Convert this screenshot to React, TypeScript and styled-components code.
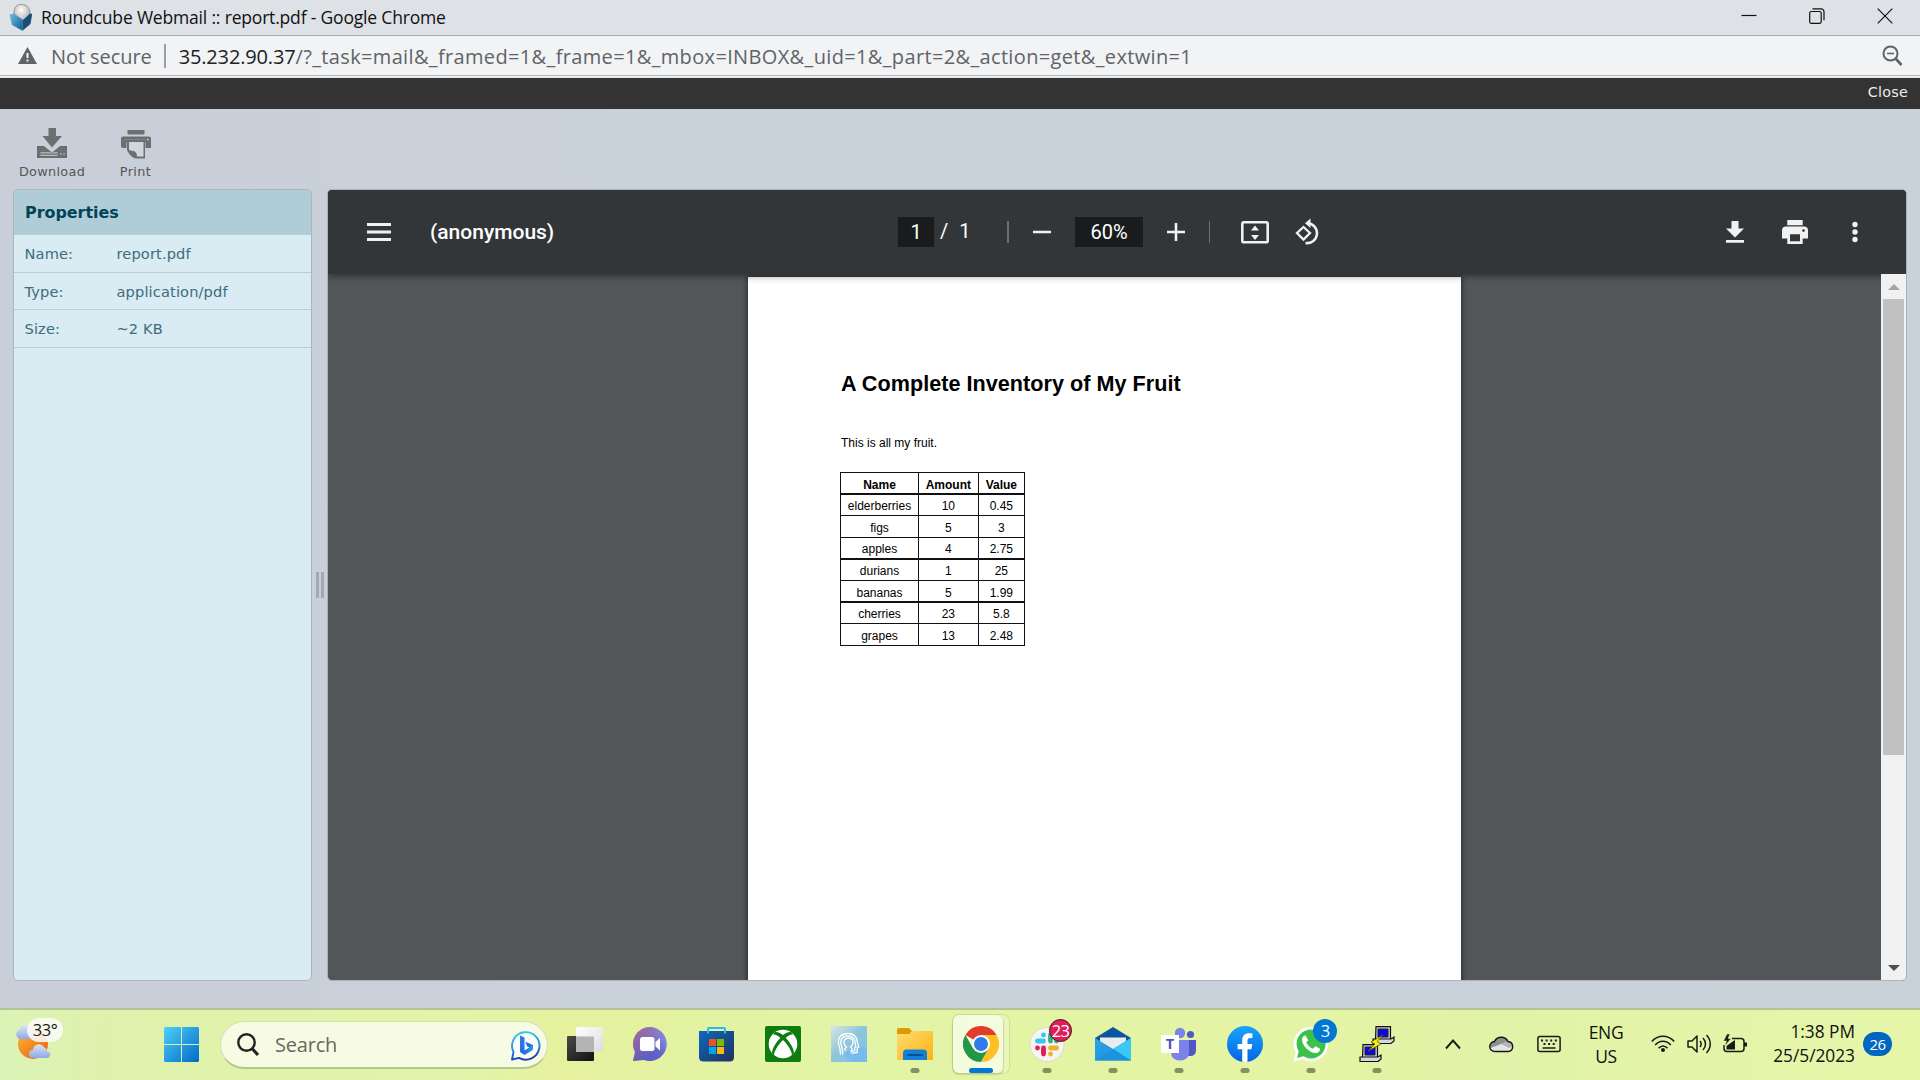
import React from 'react';
import styled, { createGlobalStyle } from 'styled-components';

const UI = '"Open Sans", "Noto Sans", sans-serif';
const SKIN = '"DejaVu Sans", Verdana, sans-serif';

const Global = createGlobalStyle`
  * { box-sizing: border-box; }
  body { margin: 0; overflow: hidden; }
  svg { display: block; flex: none; }
`;

const Screen = styled.div`
  width: 1920px;
  height: 1080px;
  display: flex;
  flex-direction: column;
  overflow: hidden;
  background: #c9d0d8;
  font-family: ${UI};
`;

/* ---------- text ---------- */
const Label = styled.span<{ $size: number; $color?: string; $ls?: number; $weight?: number; $font?: string }>`
  font-family: ${p => p.$font || UI};
  font-size: ${p => p.$size}px;
  font-weight: ${p => p.$weight || 400};
  color: ${p => p.$color || '#111'};
  letter-spacing: ${p => p.$ls || 0}px;
  white-space: pre;
`;

/* ---------- browser chrome ---------- */
const TitleBar = styled.header`
  height: 36px;
  flex: none;
  display: flex;
  align-items: center;
  padding: 0 26px 0 9px;
  background: #dee1e6;
  border-bottom: 1px solid #aaacaf;
`;
const TitleText = styled(Label)`
  margin-left: 8px;
  margin-top: -2px;
  flex: 1;
  line-height: 34px;
`;
const WindowButtons = styled.div`
  display: flex;
  gap: 52px;
  margin-top: -4px;
  margin-right: 1px;
`;
const AddressBar = styled.div`
  height: 42px;
  flex: none;
  display: flex;
  align-items: center;
  padding: 0 17px 2px 18px;
  background: #f1f3f4;
  border-bottom: 1px solid #e4e5e6;
  box-shadow: inset 0 -1px 0 #f6f6f6, inset 0 -2px 0 #b4b5b6;
`;
const AddressDivider = styled.i`
  width: 2px;
  height: 24px;
  margin: 0 13px 0 12px;
  background: #9a9da1;
`;
const SecurityNote = styled(Label)`
  margin: 2px 0 0 14px;
`;
const Url = styled(Label)`
  flex: 1;
  margin-top: 2px;
`;

/* ---------- webmail ---------- */
const TopNav = styled.nav`
  height: 31px;
  flex: none;
  display: flex;
  justify-content: flex-end;
  align-items: center;
  padding: 0 12px 3px;
  background: #333;
`;
const Mail = styled.main`
  height: 899px;
  flex: none;
  display: flex;
  flex-direction: column;
  background: linear-gradient(90deg, #c9cfd8, #c9d2da 60%, #c9d1d9);
`;
const ToolBar = styled.div`
  height: 80px;
  flex: none;
  display: flex;
  padding: 19px 0 0 12px;
`;
const ToolButton = styled.div<{ $w: number }>`
  width: ${p => p.$w}px;
  display: flex;
  flex-direction: column;
  align-items: center;
  span { line-height: 18px; margin-top: 3px; }
`;
const Split = styled.div`
  display: flex;
  height: 792px;
  padding: 0 13px;
`;
const Props = styled.section`
  width: 299px;
  border: 1px solid #a9b6be;
  border-radius: 5px;
  overflow: hidden;
  background: #d9ecf4;
`;
const PropsTitle = styled.h2`
  margin: 0;
  height: 45px;
  padding-left: 11px;
  font: bold 15.9px/46px ${SKIN};
  color: #004458;
  background: #b0ccd7;
  border-bottom: 1px solid #b5cfda;
`;
const PropRow = styled.div`
  display: grid;
  grid-template-columns: 92px 1fr;
  align-items: center;
  height: 37.6px;
  padding-left: 10.5px;
  padding-top: 1px;
  border-bottom: 1px solid #b5d0da;
`;
const Splitter = styled.div`
  width: 15px;
  display: flex;
  justify-content: center;
  align-items: center;
  gap: 2px;
  i { width: 3px; height: 26px; background: #a3a9b0; margin-top: -1px; }
`;
const Viewer = styled.section`
  width: 1580px;
  display: flex;
  flex-direction: column;
  border: 1px solid #aab3bb;
  border-radius: 5px;
  overflow: hidden;
  background: #525659;
`;

/* ---------- pdf viewer ---------- */
const PdfBar = styled.div`
  height: 84px;
  flex: none;
  display: grid;
  grid-template-columns: 570px 1fr auto;
  align-items: center;
  background: #323639;
  box-shadow: 0 2px 7px rgba(0, 0, 0, 0.45);
  z-index: 2;
`;
const BarLeft = styled.div`
  display: flex;
  align-items: center;
  gap: 39px;
  padding-left: 39px;
`;
const BarMid = styled.div`
  display: flex;
  align-items: center;
`;
const Field = styled.div<{ $w: number }>`
  width: ${p => p.$w}px;
  height: 30px;
  display: flex;
  justify-content: center;
  align-items: center;
  background: #191b1c;
`;
const PageTotal = styled(Label)`
  margin-left: 6px;
  width: 67px;
  padding-bottom: 2px;
`;
const BarDivider = styled.i<{ $w: number; $right: number }>`
  width: ${p => p.$w}px;
  height: 22px;
  margin-right: ${p => p.$right}px;
  background: #6d7072;
`;
const Gap = styled.i<{ $w: number }>`
  width: ${p => p.$w}px;
  flex: none;
`;
const BarRight = styled.div`
  display: flex;
  align-items: center;
  padding-right: 48px;
`;
const Canvas = styled.div`
  flex: 1;
  min-height: 0;
  display: flex;
`;
const PageWrap = styled.div`
  width: 1553px;
  padding: 3px 0 0 420px;
  overflow: hidden;
`;
const Sheet = styled.article`
  width: 713px;
  height: 1009px;
  padding: 93px 0 0 93px;
  background: #fff;
  box-shadow: 0 0 5px 1px rgba(0, 0, 0, 0.5);
  font-family: "Liberation Sans", Arial, sans-serif;
  color: #000;
`;
const Heading = styled.h1`
  margin: 0;
  font-size: 21.6px;
  line-height: 28px;
  font-weight: 700;
  letter-spacing: 0.03px;
`;
const Para = styled.p`
  margin: 37px 0 21px;
  font-size: 12px;
  line-height: 16px;
`;
const Table = styled.div`
  display: grid;
  grid-template-columns: 76.6px 58.8px 44.8px;
  grid-auto-rows: 20.25px;
  gap: 1.35px 1.2px;
  width: 185px;
  padding: 1.2px;
  background: #111;
  margin-left: -1px;
`;
const Cell = styled.div<{ $head?: boolean }>`
  background: #fff;
  font-size: 12px;
  font-weight: ${p => (p.$head ? 700 : 400)};
  height: 20.25px;
  padding-top: 1.5px;
  line-height: 20.5px;
  text-align: center;
`;
const ScrollTrack = styled.div`
  width: 25px;
  display: flex;
  flex-direction: column;
  align-items: center;
  background: #f1f1f1;
  z-index: 3;
`;
const Thumb = styled.div`
  width: 21px;
  height: 456px;
  margin: 9px 0 210px;
  background: #c1c1c1;
`;
const Arrow = styled.i<{ $down?: boolean }>`
  margin-top: ${p => (p.$down ? 0 : 10)}px;
  border: 6px solid transparent;
  border-${p => (p.$down ? 'top' : 'bottom')}-color: ${p => (p.$down ? '#505050' : '#a3a3a3')};
  border-${p => (p.$down ? 'bottom' : 'top')}-width: 0;
`;

/* ---------- taskbar ---------- */
const TaskBar = styled.footer`
  height: 72px;
  flex: none;
  display: flex;
  align-items: center;
  border-top: 2px solid #b5c293;
  background: linear-gradient(90deg, #dbf4b6 0, #dff1ac 110px, #dff3aa 260px, #e2f4a9 470px, #e6f19e 560px, #e4f2a0 640px, #e2f4a6 840px, #e5f4a4 1300px, #e1f3a8 1500px, #e6f6a9 1900px);
`;
const Weather = styled.div`
  width: 148px;
  padding-left: 14px;
  height: 70px;
  padding-top: 7px;
  position: relative;
`;
const Temp = styled.div`
  position: absolute;
  left: 27px;
  top: 8px;
  width: 36px;
  height: 24px;
  border-radius: 12px;
  background: rgba(250, 250, 245, 0.88);
  text-align: center;
  line-height: 23px;
  font-size: 16.5px;
  letter-spacing: -0.5px;
  color: #1b1b1b;
`;
const Slot = styled.div`
  width: 66px;
  height: 70px;
  display: flex;
  align-items: center;
  justify-content: center;
  position: relative;
  padding-bottom: 2px;
`;
const Hover = styled.div`
  position: absolute;
  left: 5px;
  top: 5px;
  width: 56px;
  height: 58px;
  border-radius: 6px;
  background: rgba(255, 255, 255, 0.25);
  box-shadow: 0 0 0 1px rgba(170, 190, 120, 0.35);
  &::before {
    content: '';
    display: block;
    width: 50px;
    height: 58px;
    border-radius: 6px;
    background: rgba(255, 255, 255, 0.5);
    box-shadow: 0 1px 1px 1px rgba(150, 170, 110, 0.35);
  }
  & + svg { position: relative; }
`;
const Running = styled.i<{ $active?: boolean }>`
  position: absolute;
  bottom: 7px;
  left: 50%;
  width: ${p => (p.$active ? 24 : 9)}px;
  height: 5px;
  transform: translateX(-50%);
  border-radius: 3px;
  background: ${p => (p.$active ? '#0078d4' : '#85905f')};
`;
const Badge = styled.div<{ $bg: string; $ring?: boolean }>`
  position: absolute;
  left: 35px;
  top: 9px;
  width: ${p => (p.$ring ? 23 : 24)}px;
  height: ${p => (p.$ring ? 23 : 24)}px;
  border-radius: 50%;
  border: ${p => (p.$ring ? '1.5px solid #4a1428' : 'none')};
  background: ${p => p.$bg};
  color: #fff;
  display: flex;
  align-items: center;
  justify-content: center;
  font-size: 16.5px;
  line-height: 20px;
  letter-spacing: -0.7px;
`;
const SearchBox = styled.div`
  width: 328px;
  height: 48px;
  margin-left: 6px;
  margin-right: 4px;
  padding: 0 6px 0 16px;
  display: flex;
  align-items: center;
  border-radius: 24px;
  background: #f7fbe4;
  border: 1px solid #d3e0ab;
  border-bottom: 2px solid #b5c58e;
  span { flex: 1; margin-left: 16px; }
`;
const Tray = styled.div`
  flex: 1;
  height: 70px;
  display: flex;
  align-items: center;
  padding-left: 35px;
  padding-bottom: 2px;
`;
const Stack = styled.div<{ $w: number; $align: string }>`
  width: ${p => p.$w}px;
  display: flex;
  flex-direction: column;
  align-items: ${p => p.$align};
  span { line-height: 24px; }
`;
const Notif = styled.div`
  margin-left: 8px;
  width: 29px;
  height: 24px;
  border-radius: 12px;
  background: #0067c0;
  color: #fff;
  display: flex;
  align-items: center;
  justify-content: center;
  font-size: 15px;
  letter-spacing: -0.5px;
`;

/* ---------- icons ---------- */
const Cube = () => (
  <svg width="24" height="28" viewBox="0 0 24 28">
    <defs>
      <linearGradient id="cu" x1="0" y1="0" x2="1" y2="1"><stop offset="0" stopColor="#6cc0e6" /><stop offset="1" stopColor="#0d5b93" /></linearGradient>
      <radialGradient id="cs" cx=".45" cy=".3" r=".8"><stop offset="0" stopColor="#fff" /><stop offset="1" stopColor="#9a9a9a" /></radialGradient>
    </defs>
    <path d="M5 9C5 3 8 .5 12.500.5S21 3 21 9v6l-8 4-8-5Z" fill="url(#cs)" stroke="#777" strokeWidth=".7" />
    <path d="M.5 10.500 5 9.500l9 6.500-.5 10.800L3 21Z" fill="url(#cu)" />
    <path d="M13.500 26.800 21.500 20l1.700-10L21 9.500 14 16Z" fill="#1a4f74" />
  </svg>
);
const Minimize = () => <svg width="16" height="16"><path d="M.5 7.500h15" stroke="#111" strokeWidth="1.200" /></svg>;
const Restore = () => (
  <svg width="16" height="16" fill="none" stroke="#111" strokeWidth="1.200">
    <rect x=".7" y="3.500" width="11.500" height="11.800" rx="1.500" />
    <path d="M3.500.8h8.500a3 3 0 0 1 3 3v8.500" />
  </svg>
);
const CloseX = () => <svg width="16" height="16"><path d="m.7.700 14.600 14.600M15.300.700.7 15.300" stroke="#111" strokeWidth="1.200" /></svg>;
const Warning = () => (
  <svg width="19" height="17" viewBox="0 0 19 17">
    <path d="M9.500 0 19 17H0Z" fill="#5f6368" />
    <path d="M8.500 6h2v5h-2zM8.500 12.500h2v2h-2z" fill="#f1f3f4" />
  </svg>
);
const ZoomOut = () => (
  <svg width="21" height="21" fill="none" stroke="#5f6368" strokeWidth="2">
    <circle cx="8.500" cy="8.500" r="7" />
    <path d="m13.500 13.500 6 6.500" strokeWidth="2.600" />
    <path d="M5 8.500h7" strokeWidth="1.600" />
  </svg>
);
const TrayDown = () => (
  <svg width="32" height="32" viewBox="0 0 32 32" fill="#69706f">
    <path d="M12.500 0h7.500v8h6L16 19.500 6.500 8h6Z" />
    <path d="M1 18h7l8 6.500L24 18h7v12H1Z" />
    <path d="M4.500 24h10l1.500 1 1.500-1h4v3.500h-17Z" fill="#aab1b5" />
    <path d="M4.500 25.500h17v2h-17Z" fill="#69706f" />
    <path d="M4.500 27.300h17M24 26h1.500M27.300 26h1.500" stroke="#b4bbc0" strokeWidth="1.300" />
  </svg>
);
const RollPrinter = () => (
  <svg width="32" height="32" viewBox="0 0 32 32">
    <path d="M7.500 2h17v4.500h-17Z" fill="#69706f" />
    <path d="M1 10.500q0-2 2-2h26q2 0 2 2V20h-5.500v-5.500H6.500V20H3q-2 0-2-2Z" fill="#69706f" />
    <path d="M4.500 11.500h21" stroke="#7d8586" strokeWidth="1" />
    <path d="M27 11.500h1.500" stroke="#c9d0d8" strokeWidth="1.500" />
    <path d="M7 14h18v16.500h-9c-3 0-7-4-9-8.500Z" fill="#69706f" />
    <path d="M9 14h14.500v14.500h-6.500c0-4-2-5.500-4.500-5.500L9 22Z" fill="#cfd5dc" />
  </svg>
);
const Burger = () => <svg width="24" height="18" fill="#f1f1f1"><path d="M0 0h24v3H0zM0 7.500h24v3H0zM0 15h24v3H0z" /></svg>;
const Minus = () => <svg width="18" height="18"><path d="M0 9h18" stroke="#f1f1f1" strokeWidth="2.600" /></svg>;
const Plus = () => <svg width="18" height="18"><path d="M0 9h18M9 0v18" stroke="#f1f1f1" strokeWidth="2.600" /></svg>;
const FitPage = () => (
  <svg width="28" height="24">
    <rect x="1.300" y="2.300" width="25.400" height="20" rx="1.500" fill="none" stroke="#f1f1f1" strokeWidth="2.600" />
    <path d="m14 5.500 4 5h-8ZM14 20l4-5h-8Z" fill="#f1f1f1" />
  </svg>
);
const Rotate = () => (
  <svg width="28" height="28" viewBox="0 0 28 28">
    <path d="M8.500 9 15 15l-6.500 6.500L2 15Z" fill="none" stroke="#f1f1f1" strokeWidth="2.300" />
    <path d="M13.500 5.200A10 10 0 1 1 10.500 25" fill="none" stroke="#f1f1f1" strokeWidth="2.500" />
    <path d="M15.500.5v9.500L10 5.200Z" fill="#f1f1f1" />
  </svg>
);
const PdfDown = () => <svg width="18" height="22" fill="#f1f1f1"><path d="M5.500 0h7v7.500H18l-9 9-9-9h5.500ZM0 19h18v2.700H0Z" /></svg>;
const PdfPrint = () => (
  <svg width="26" height="24" viewBox="0 0 26 24">
    <path d="M5.300 0h15.400v5.200H5.300ZM4 6.600h18a4 4 0 0 1 4 4v7.800h-5.300V24H5.300v-5.600H0v-7.800a4 4 0 0 1 4-4Z" fill="#f1f1f1" />
    <path d="M8 14.300h10v6.900H8Z" fill="#323639" />
    <circle cx="21.500" cy="10.600" r="1.300" fill="#323639" />
  </svg>
);
const Dots = () => <svg width="6" height="22" fill="#f1f1f1"><circle cx="3" cy="3.500" r="2.700" /><circle cx="3" cy="11" r="2.700" /><circle cx="3" cy="18.500" r="2.700" /></svg>;

const WeatherIcon = () => (
  <svg width="40" height="46" viewBox="0 0 40 46">
    <defs>
      <linearGradient id="sun" x1="0" y1="0" x2="1" y2="1"><stop offset="0" stopColor="#fdb93a" /><stop offset="1" stopColor="#ea5a0c" /></linearGradient>
      <linearGradient id="cl" x1="0" y1="0" x2="0" y2="1"><stop offset="0" stopColor="#d7e4f8" /><stop offset="1" stopColor="#8eaae4" /></linearGradient>
    </defs>
    <circle cx="19" cy="27" r="15" fill="url(#sun)" />
    <path d="M5 22a5 5 0 0 1 0-9 7 7 0 0 1 12-2c4 1 6 3 6 6s-2 5-5 5Z" fill="url(#cl)" />
    <path d="M19 41a4 4 0 0 1 0-8 6 6 0 0 1 11-3 5 5 0 0 1 3 4c5 1 4 7 0 7Z" fill="url(#cl)" />
  </svg>
);
const WinLogo = () => (
  <svg width="35" height="35" viewBox="0 0 35 35">
    <defs><linearGradient id="wl" x1="0" y1="0" x2="1" y2="1" gradientUnits="objectBoundingBox"><stop offset="0" stopColor="#4fd0fb" /><stop offset="1" stopColor="#0069c8" /></linearGradient></defs>
    <path d="M1 0h16v17H0V1ZM18 0h16l1 1v16H18ZM0 18h17v17H1l-1-1ZM18 18h17v16l-1 1H18Z" fill="url(#wl)" />
  </svg>
);
const Magnifier = () => (
  <svg width="22" height="23" fill="none" stroke="#222" strokeWidth="2.400">
    <circle cx="9.500" cy="9.500" r="8.200" />
    <path d="m15 15.500 6 6.500" strokeWidth="3" />
  </svg>
);
const Bing = () => (
  <svg width="30" height="32" viewBox="0 0 30 32">
    <defs>
      <linearGradient id="b1" x1=".1" y1="0" x2=".3" y2="1"><stop offset="0" stopColor="#2bd3ee" /><stop offset=".6" stopColor="#2b87e8" /><stop offset="1" stopColor="#1b3fae" /></linearGradient>
      <linearGradient id="b2" x1="0" y1="0" x2="1" y2="1"><stop offset="0" stopColor="#2f7df0" /><stop offset=".6" stopColor="#2368ea" /><stop offset="1" stopColor="#37c6f0" /></linearGradient>
    </defs>
    <path d="M1 30.500 2.500 23A13.700 13.700 0 1 1 8 28.800Z" fill="#fbfdf5" stroke="url(#b1)" strokeWidth="1.900" strokeLinejoin="round" />
    <path d="m9 6.500 4.500 2v13l5-3-2.500-1.200-1.700-4.500 7.700 3.200v5L13.500 26 9 23Z" fill="url(#b2)" />
  </svg>
);
const TaskView = () => (
  <svg width="36" height="34">
    <defs>
      <linearGradient id="tv" x1="0" y1="0" x2="1" y2="1"><stop offset="0" stopColor="#4a4a4a" /><stop offset="1" stopColor="#111" /></linearGradient>
      <linearGradient id="tw" x1="0" y1="0" x2="1" y2="1"><stop offset="0" stopColor="#fff" /><stop offset="1" stopColor="#dcdcdc" /></linearGradient>
    </defs>
    <rect y="9" width="27" height="25" rx="1" fill="url(#tv)" />
    <rect x="9" width="27" height="25" rx="1.500" fill="url(#tw)" />
    <path d="M9 9.500h18V25H9Z" fill="#b4b4b4" />
  </svg>
);
const Chat = () => (
  <svg width="36" height="36" viewBox="0 0 36 36">
    <defs><linearGradient id="ch" x1="0" y1="1" x2="1" y2="0"><stop offset="0" stopColor="#5157c4" /><stop offset=".5" stopColor="#6264c8" /><stop offset="1" stopColor="#82a4ff" /></linearGradient>
      <linearGradient id="ch2" x1="0" y1="0" x2=".7" y2=".7"><stop offset="0" stopColor="#a86a93" /><stop offset="1" stopColor="#a86a93" stopOpacity="0" /></linearGradient></defs>
    {['url(#ch)', 'url(#ch2)'].map(f => <path key={f} d="M17 1a17 17 0 1 1-6 33L0 35l2-9A17 17 0 0 1 17 1Z" fill={f} />)}
    <rect x="7" y="11" width="14.500" height="14" rx="2.500" fill="#fff" />
    <path d="m22.500 16 4.500-4v12.500l-4.500-4Z" fill="#fff" />
  </svg>
);
const Store = () => (
  <svg width="36" height="36" viewBox="0 0 36 36">
    <defs><linearGradient id="st" x1="0" y1="0" x2="1" y2="1"><stop offset="0" stopColor="#0b6ac0" /><stop offset="1" stopColor="#22305c" /></linearGradient></defs>
    <path d="M0 5h35v26q0 4.500-4.500 4.500h-26Q0 35.500 0 31Z" fill="url(#st)" />
    <path d="M9 7.500V3q0-1 1-1h15q1 0 1 1v4.500" fill="none" stroke="#29bdee" strokeWidth="2" />
    <path d="M10 13h7v7h-7z" fill="#f25022" /><path d="M18 13h7v7h-7z" fill="#7fba00" />
    <path d="M10 21h7v7h-7z" fill="#00a4ef" /><path d="M18 21h7v7h-7z" fill="#ffb900" />
  </svg>
);
const Xbox = () => (
  <svg width="36" height="36" viewBox="0 0 36 36">
    <rect width="36" height="36" rx="2" fill="#107c10" />
    <circle cx="18" cy="18" r="14.300" fill="#fff" />
    <path d="M10 6C13 5.500 16 7.500 18 9c2-1.500 5-3.500 8-3l2 2.500c-2-.5-5 1-7.300 3.500 4 4 8 10 8.300 15l-2 2.500c0-5-6-13-9-15.500-3 2.500-9 10.500-9 15.500L7 27c.3-5 4.300-11 8.300-15C13 9.500 10 8 8 8.500Z" fill="#107c10" />
  </svg>
);
const HeadApp = () => (
  <svg width="36" height="36" viewBox="0 0 36 36">
    <defs><linearGradient id="ha" x1="0" y1="0" x2="1" y2="1"><stop offset="0" stopColor="#d9e8e4" /><stop offset=".45" stopColor="#8fc6d8" /><stop offset="1" stopColor="#7fc0ee" /></linearGradient></defs>
    <rect width="36" height="36" fill="url(#ha)" />
    <path d="m12 28 8 8h16V24l-9-6Z" fill="#6fb4f4" opacity=".55" />
    <g fill="none" stroke="#fff" strokeWidth="1.300">
      <path d="M9.500 28.500 8.800 22C5 13 9 7.500 17 7.500c6.500 0 9.500 4.500 9.300 9l1.700 4.500-1.800 1v4.500l-6 .8" />
      <path d="M11.800 28.300 11 21.500C8 14 11 9.800 17 9.800c5 0 7.200 3.500 7 7l1 3.700-1.300 1v3.200l-4.500.7" />
      <path d="M14 25v-2.500l1.500-1.500c-4-3-3-9 2-9s6 6 2 9l1.500 1.500V25" />
    </g>
  </svg>
);
const Folder = () => (
  <svg width="36" height="36" viewBox="0 0 36 36">
    <defs><linearGradient id="fo" x1="0" y1="0" x2="1" y2="1"><stop offset="0" stopColor="#ffdc74" /><stop offset="1" stopColor="#fbb211" /></linearGradient></defs>
    <path d="M0 3.500q0-1.500 1.500-1.500H12l3 3v4H0Z" fill="#dd9a05" />
    <path d="M0 8h12l3-3h20q1 0 1 1v28H0Z" fill="url(#fo)" />
    <path d="M6 34v-7q0-3.500 3.500-3.500h17Q30 23.500 30 27v7Z" fill="#1380d8" />
    <path d="M11 29h14" stroke="#0a4f92" strokeWidth="1.800" strokeLinecap="round" />
  </svg>
);
const Chrome = () => (
  <svg width="36" height="36" viewBox="0 0 36 36">
    <path d="M18 18 2.400 9A18 18 0 0 1 33.600 9Z" fill="#e33b2e" />
    <path d="M2.400 9A18 18 0 0 0 18 36l7.800-13.500L10.200 22.500Z" fill="#229746" />
    <path d="M33.600 9H18v4l7.800 9.500L18 36A18 18 0 0 0 33.600 9Z" fill="#fdc122" />
    <circle cx="18" cy="18" r="9" fill="#fff" />
    <circle cx="18" cy="18" r="7" fill="#2f7bea" />
  </svg>
);
const Slack = () => (
  <svg width="36" height="36" viewBox="0 0 36 36">
    <circle cx="18" cy="18.500" r="17" fill="#f6f4f2" stroke="#d6d8c4" strokeWidth=".8" />
    <g strokeWidth="4.800" strokeLinecap="round">
      <path d="M14.500 9v.01M8.500 15h6" stroke="#36c5f0" />
      <path d="M21.500 9v6M27.500 15v.01" stroke="#2eb67d" />
      <path d="M14.500 22v6M8.500 22v.01" stroke="#e01e5a" />
      <path d="M21.500 22h6M21.500 28v.01" stroke="#ecb22e" />
    </g>
  </svg>
);
const MailApp = () => (
  <svg width="36" height="36" viewBox="0 0 36 36">
    <defs><linearGradient id="ma" x1="0" y1="0" x2="1" y2="1"><stop offset="0" stopColor="#2aa6e4" /><stop offset="1" stopColor="#1c8fdc" /></linearGradient></defs>
    <path d="M0 12 18 1l18 11v6H0Z" fill="#0a56a0" />
    <path d="M5 11.500h26V20L18 27 5 20Z" fill="#ececec" />
    <path d="m0 12 18 11 18-11v22.500H0Z" fill="url(#ma)" />
    <path d="m18 23 18-11v22.500Z" fill="#3cc8f6" />
    <path d="M0 34.500 18 23l18 11.500Z" fill="#1d93dd" />
  </svg>
);
const TGlyph = styled.div`
  position: absolute;
  left: 15px;
  top: 25px;
  width: 18px;
  height: 18px;
  background: #fff;
  color: #4b53bc;
  font: 700 14.500px/18px ${UI};
  text-align: center;
`;
const Teams = () => (
  <>
    <svg width="36" height="36" viewBox="0 0 36 36">
      <circle cx="29.500" cy="8.500" r="3.600" fill="#5059c9" />
      <path d="M24 14h11v10q0 6-6 6h-5Z" fill="#4f57c6" />
      <circle cx="19" cy="7" r="5.200" fill="#7b83eb" />
      <path d="M10 14h18v12q0 8.500-9 8.500t-9-8.500Z" fill="#7b83eb" />
    </svg>
    <TGlyph>T</TGlyph>
  </>
);
const Facebook = () => (
  <svg width="36" height="36" viewBox="0 0 36 36">
    <defs>
      <linearGradient id="fb" x1="0" y1="0" x2="0" y2="1"><stop offset="0" stopColor="#18a6fb" /><stop offset="1" stopColor="#0664e4" /></linearGradient>
      <clipPath id="fc"><circle cx="18" cy="18" r="18" /></clipPath>
    </defs>
    <circle cx="18" cy="18" r="18" fill="url(#fb)" />
    <path clipPath="url(#fc)" d="M15.200 36V23.300h-4.600V18h4.600v-3.800c0-4.600 2.700-7 6.800-7 1.600 0 3.400.3 3.400.3v4.600h-2.100c-2.200 0-2.800 1.300-2.800 2.700V18h4.700l-.8 5.300h-3.900V36Z" fill="#fff" />
  </svg>
);
const WhatsApp = () => (
  <svg width="36" height="36" viewBox="0 0 36 36">
    <path d="M.5 35.500 2.800 26.500A17.300 17.300 0 1 1 9.500 33.200Z" fill="#fff" />
    <path d="m4 32 1.700-6.500A14.500 14.500 0 1 1 10.500 30.300Z" fill="#3cc14a" />
    <path d="M12.500 9.500c-1-.6-3.500 1.200-3.500 4 0 6 7.500 13.500 13.500 13.500 3 0 5-2.500 4.500-4.300l-4.500-2.500-2.500 2.500c-3-1-5.700-3.700-6.700-6.500l2-2Z" fill="#fff" />
  </svg>
);
const Pc = ({ x, y }: { x: number; y: number }) => (
  <g transform={`translate(${x} ${y})`}>
    <path d="M4 .6h14.500v13H3.500Z" fill="#c9c9c9" stroke="#111" strokeWidth="1.200" />
    <path d="M6 3h10v8H6Z" fill="#0a0ae0" stroke="#222" />
    <path d="M1 13h18l3-2v4l-3 2.500H1Z" fill="#d6d6d6" stroke="#111" strokeWidth="1.200" />
  </g>
);
const Putty = () => (
  <svg width="36" height="36" viewBox="0 0 36 36">
    <Pc x={13} y={0} /><Pc x={0} y={18} />
    <path d="m24 9-12 7 4 2-7 7 13-7-4-2.500Z" fill="#fff200" stroke="#5a5500" strokeWidth=".8" />
  </svg>
);
const Chevron = () => <svg width="16" height="11"><path d="m1 9.500 7-8 7 8" fill="none" stroke="#1a1a1a" strokeWidth="1.900" /></svg>;
const OneDrive = () => (
  <svg width="25" height="18" viewBox="0 0 25 18">
    <path d="M6 16.500a5 5 0 0 1-.5-10A7.500 7.500 0 0 1 19 6.500c6 .5 6.500 10 0 10Z" fill="#e4e4e4" />
    <path d="M1.500 13C0 9 3 6.500 5.500 6.500 7 1 16 0 19 6.500L12 9Z" fill="#8f8f8f" />
    <path d="m12 9 7-2.500c3 0 5 2 4.500 5L20 13Z" fill="#b5b5b5" />
    <path d="M6 16.500a5 5 0 0 1-.5-10A7.500 7.500 0 0 1 19 6.500c6 .5 6.500 10 0 10Z" fill="none" stroke="#151515" strokeWidth="1.400" />
  </svg>
);
const Keyboard = () => (
  <svg width="24" height="18" fill="none" stroke="#1a1a1a">
    <rect x=".9" y="1.400" width="22.200" height="15.200" rx="2" strokeWidth="1.500" />
    <path d="M4 5.500h16" strokeWidth="2" strokeDasharray="2 2.600" />
    <path d="M6.500 9h12" strokeWidth="2" strokeDasharray="2 2.600" />
    <path d="M5.500 13h13" strokeWidth="1.500" />
  </svg>
);
const Wifi = () => (
  <svg width="24" height="18" fill="none" stroke="#1a1a1a" strokeWidth="1.600">
    <path d="M.8 6.500C7-.5 17-.5 23.200 6.500M4.200 10c4.500-5 11-5 15.600 0M7.500 13.200c2.700-3 6.300-3 9 0" />
    <circle cx="12" cy="15" r="2" fill="#1a1a1a" stroke="none" />
  </svg>
);
const Sound = () => (
  <svg width="25" height="20" fill="none" stroke="#1a1a1a" strokeWidth="1.500">
    <path d="M1 7h4l5-5v16l-5-5H1Z" strokeLinejoin="round" />
    <path d="M13 7c1.500 2 1.500 4 0 6M16 4c3.300 3.500 3.300 8.500 0 12M19.500 1c5 5.500 5 12.500 0 18" />
  </svg>
);
const Battery = () => (
  <svg width="25" height="20" viewBox="0 0 25 20">
    <path d="M9 4.500h9q3 0 3 3v7q0 3-3 3H4q-3 0-3-3V11" fill="none" stroke="#1a1a1a" strokeWidth="1.500" />
    <path d="M21 8.500h3v4h-3Z" fill="#1a1a1a" />
    <path d="M3.500 15.500V12L9 8l3-2v9.500Z" fill="#1a1a1a" />
    <path d="M4 0 .5 7H3.500L2 12l6-7.500H5L7 0Z" fill="#1a1a1a" stroke="#e2f3a7" strokeWidth=".5" />
  </svg>
);

const properties = [['Name:', 'report.pdf'], ['Type:', 'application/pdf'], ['Size:', '~2 KB']];
const fruit = [
  ['Name', 'Amount', 'Value'],
  ['elderberries', '10', '0.45'],
  ['figs', '5', '3'],
  ['apples', '4', '2.75'],
  ['durians', '1', '25'],
  ['bananas', '5', '1.99'],
  ['cherries', '23', '5.8'],
  ['grapes', '13', '2.48'],
];
type App = { id: string; icon: React.FC; running?: boolean; active?: boolean; badge?: string; bg?: string; ring?: boolean };
const apps: App[] = [
  { id: 'taskview', icon: TaskView },
  { id: 'chat', icon: Chat },
  { id: 'store', icon: Store },
  { id: 'xbox', icon: Xbox },
  { id: 'head', icon: HeadApp },
  { id: 'folder', icon: Folder, running: true },
  { id: 'chrome', icon: Chrome, running: true, active: true },
  { id: 'slack', icon: Slack, running: true, badge: '23', bg: '#e01e5a', ring: true },
  { id: 'mail', icon: MailApp, running: true },
  { id: 'teams', icon: Teams, running: true },
  { id: 'facebook', icon: Facebook, running: true },
  { id: 'whatsapp', icon: WhatsApp, running: true, badge: '3', bg: '#0078d4' },
  { id: 'putty', icon: Putty, running: true },
];

export default function App() {
  return (
    <Screen>
      <Global />
      <TitleBar>
        <Cube />
        <TitleText $size={17.5} $ls={-0.18}>Roundcube Webmail :: report.pdf - Google Chrome</TitleText>
        <WindowButtons><Minimize /><Restore /><CloseX /></WindowButtons>
      </TitleBar>
      <AddressBar>
        <Warning />
        <SecurityNote $size={20} $color="#5f6368" $ls={-0.08}>Not secure</SecurityNote>
        <AddressDivider />
        <Url $size={20} $color="#5f6368" $ls={0.35}>
          <Label $size={20} $color="#202124" $ls={-0.15}>35.232.90.37</Label>
          /?_task=mail&amp;_framed=1&amp;_frame=1&amp;_mbox=INBOX&amp;_uid=1&amp;_part=2&amp;_action=get&amp;_extwin=1
        </Url>
        <ZoomOut />
      </AddressBar>
      <TopNav><Label $font={SKIN} $size={14.3} $color="#eee" $ls={0.25}>Close</Label></TopNav>
      <Mail>
        <ToolBar>
          <ToolButton $w={80}><TrayDown /><Label $font={SKIN} $size={12.8} $color="#555" $ls={0.33}>Download</Label></ToolButton>
          <ToolButton $w={87}><RollPrinter /><Label $font={SKIN} $size={12.8} $color="#555" $ls={0.4}>Print</Label></ToolButton>
        </ToolBar>
        <Split>
          <Props>
            <PropsTitle>Properties</PropsTitle>
            {properties.map(([k, v]) => (
              <PropRow key={k}>
                <Label $font={SKIN} $size={14.6} $color="#3f6b7b" $ls={0.14}>{k}</Label>
                <Label $font={SKIN} $size={14.6} $color="#3f6b7b" $ls={0.14}>{v}</Label>
              </PropRow>
            ))}
          </Props>
          <Splitter><i /><i /></Splitter>
          <Viewer>
            <PdfBar>
              <BarLeft>
                <Burger />
                <Label $font="Roboto, sans-serif" $size={21} $weight={500} $color="#fff">(anonymous)</Label>
              </BarLeft>
              <BarMid>
                <Field $w={36}><Label $font="Roboto, sans-serif" $size={20} $color="#fff">1</Label></Field>
                <PageTotal $font="Roboto, sans-serif" $size={20} $color="#fff" $ls={0.4}>/  1</PageTotal>
                <BarDivider $w={2} $right={24} />
                <Minus />
                <Gap $w={24} />
                <Field $w={68}><Label $font="Roboto, sans-serif" $size={20} $color="#fff">60%</Label></Field>
                <Gap $w={24} />
                <Plus />
                <Gap $w={24} />
                <BarDivider $w={1} $right={31} />
                <FitPage />
                <Gap $w={26} />
                <Rotate />
              </BarMid>
              <BarRight><PdfDown /><Gap $w={38} /><PdfPrint /><Gap $w={44} /><Dots /></BarRight>
            </PdfBar>
            <Canvas>
              <PageWrap>
                <Sheet>
                  <Heading>A Complete Inventory of My Fruit</Heading>
                  <Para>This is all my fruit.</Para>
                  <Table>
                    {fruit.flatMap((row, r) => row.map((c, i) => <Cell key={`${r}-${i}`} $head={r === 0}>{c}</Cell>))}
                  </Table>
                </Sheet>
              </PageWrap>
              <ScrollTrack><Arrow /><Thumb /><Arrow $down /></ScrollTrack>
            </Canvas>
          </Viewer>
        </Split>
      </Mail>
      <TaskBar>
        <Weather><WeatherIcon /><Temp>33°</Temp></Weather>
        <Slot><WinLogo /></Slot>
        <SearchBox>
          <Magnifier />
          <Label $size={20} $color="#66695c" $ls={-0.2}>Search</Label>
          <Bing />
        </SearchBox>
        {apps.map(a => (
          <Slot key={a.id}>
            {a.active && <Hover />}
            <a.icon />
            {a.badge && <Badge $bg={a.bg!} $ring={a.ring}>{a.badge}</Badge>}
            {a.running && <Running $active={a.active} />}
          </Slot>
        ))}
        <Tray>
          <Chevron />
          <Gap $w={28} />
          <OneDrive />
          <Gap $w={23} />
          <Keyboard />
          <Gap $w={23} />
          <Stack $w={44} $align="center">
            <Label $size={17.5} $ls={-0.4}>ENG</Label>
            <Label $size={17.5} $ls={-0.4}>US</Label>
          </Stack>
          <Gap $w={23} />
          <Wifi />
          <Gap $w={12} />
          <Sound />
          <Gap $w={11} />
          <Battery />
          <Gap $w={12} />
          <Stack $w={95} $align="flex-end">
            <Label $size={17.3}>1:38 PM</Label>
            <Label $size={17.3}>25/5/2023</Label>
          </Stack>
          <Notif>26</Notif>
        </Tray>
      </TaskBar>
    </Screen>
  );
}
